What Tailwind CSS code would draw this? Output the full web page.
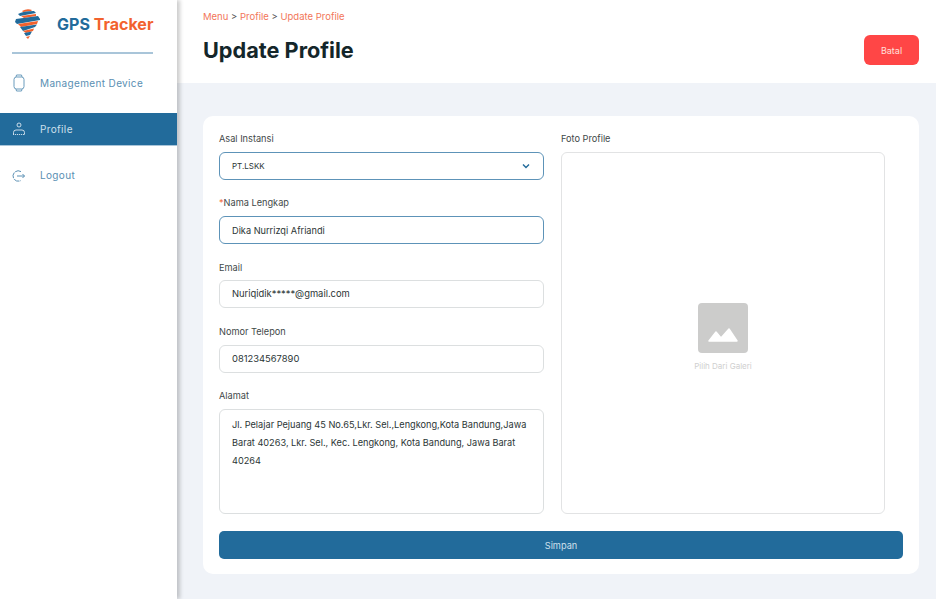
<!doctype html>
<html lang="en">
  <head>
    <meta charset="UTF-8" />
    <title>GPS Tracker - Update Profile</title>
    <script src="https://cdn.jsdelivr.net/npm/@tailwindcss/browser@4"></script>
  </head>
  <body class="w-[936px] h-[599px] overflow-hidden flex bg-[#f0f3f8] font-[Inter,sans-serif] text-[#2b3535]">
    <!-- sidebar -->
    <aside class="w-[177px] h-full shrink-0 bg-white shadow-[3px_0_4px_rgba(0,0,0,0.2)] z-10 flex flex-col">
      <div class="h-[54px] ml-[12px] mr-[24px] border-b-2 border-[#a9c5d9] flex items-start">
        <svg class="w-[25px] h-[30px] mt-[9px] ml-[3px] shrink-0" viewBox="0 0 25 30">
          <path d="M7 2 Q12 -1 17 1 L16 2 L8 3 Z" fill="#f2622e" />
          <path d="M3 5 Q8 2 19 2 L21 4 L5 7 Z" fill="#226b9b" />
          <path d="M6 7 L21 5 L21 7 L9 9 Z" fill="#f2622e" />
          <path d="M1 10 L23 7 L25 10 L25 11 L2 15 L0 13 Z" fill="#226b9b" />
          <path d="M3 15 L23 12 L22 15 L6 18 Z" fill="#f2622e" />
          <path d="M5 18 L22 15.5 L20 18 L8 22 Z" fill="#226b9b" />
          <path d="M8 22 L19 19.5 L18 22 L11 24 Z" fill="#f2622e" />
          <path d="M9 24 L17 22.5 L15 26 L11 27 Z" fill="#226b9b" />
          <path d="M11 28 L15 27 L13 30 Z" fill="#f2622e" />
        </svg>
        <div class="ml-[17px] mt-[14px] text-[16px] leading-[20px] font-bold whitespace-nowrap">
          <span class="text-[#226b9b]">GPS</span> <span class="text-[#f2622e]">Tracker</span>
        </div>
      </div>
      <nav class="mt-[13px] flex flex-col text-[10px] tracking-[0.35px]">
        <a class="h-[32px] flex items-center text-[#5a8fb3]">
          <svg class="w-[14px] h-[18px] ml-[12px] mr-[14px]" viewBox="0 0 14 18" fill="none" stroke="#6b9cbd" stroke-width="1">
            <rect x="2" y="3" width="10" height="12" rx="2.5" />
            <path d="M4 3 L4.5 1 H9.5 L10 3 M4 15 L4.5 17 H9.5 L10 15" />
          </svg>
          Management Device
        </a>
        <a class="mt-[14px] h-[33px] flex items-center bg-[#226b9b] border-b border-[#a9c5d9] text-[#cfe0ec]">
          <svg class="w-[14px] h-[14px] ml-[12px] mr-[14px]" viewBox="0 0 14 14" fill="none" stroke="#dbe7f0" stroke-width="0.9">
            <circle cx="7" cy="3" r="2" />
            <path d="M1.5 12.5 V10.5 Q1.5 8 4 8 H10 Q12.5 8 12.5 10.5 V12.5" />
            <path d="M1 12.5 H13" stroke-dasharray="1.2 0.8" />
          </svg>
          Profile
        </a>
        <a class="mt-[13px] h-[33px] flex items-center text-[#5a8fb3]">
          <svg class="w-[14px] h-[14px] ml-[12px] mr-[14px]" viewBox="0 0 14 14" fill="none" stroke="#5b90b4" stroke-width="1">
            <path d="M9 2.6 A5.2 5.2 0 1 0 9 11.4" stroke-dasharray="6 1" />
            <path d="M5 7 H12.5 M10.5 5 L12.5 7 L10.5 9" />
          </svg>
          Logout
        </a>
      </nav>
    </aside>

    <div class="flex-1 flex flex-col min-w-0">
      <!-- header -->
      <header class="h-[83px] shrink-0 bg-white pl-[26px] pr-[17px]">
        <p class="pt-[11px] text-[9.5px] leading-[12px] text-[#f2765a]">
          Menu <span class="text-[#555]">&gt;</span> Profile <span class="text-[#555]">&gt;</span> Update Profile
        </p>
        <div class="mt-[12px] flex items-center justify-between">
          <h1 class="text-[21.7px] leading-[30px] font-bold text-[#14262a]">Update Profile</h1>
          <button class="w-[55px] h-[30px] pt-[1px] rounded-[6px] bg-[#ff4646] text-[9px] text-[#ffe0dc]">Batal</button>
        </div>
      </header>

      <!-- form card -->
      <main class="mt-[33px] ml-[26px] mr-[17px] h-[458px] rounded-[10px] bg-white p-[16px] text-[9.2px]">
        <div class="flex gap-[17px]">
          <div class="w-[325px] shrink-0">
            <label class="block h-[12px] leading-[12px] mt-[1px] text-[#3f4949]">Asal Instansi</label>
            <div class="mt-[7px] h-[28px] rounded-[6px] border border-[#5d93b8] px-[12px] flex items-center justify-between text-[8px]">
              PT.LSKK
              <svg class="w-[8px] h-[6px] mr-[1px]" viewBox="0 0 8 6" fill="none" stroke="#226b9b" stroke-width="1.4"><path d="M1 1.5 L4 4.5 L7 1.5" /></svg>
            </div>
            <label class="block h-[12px] leading-[12px] mt-[17px] text-[#3f4949]"><span class="text-[#f2622e]">*</span>Nama Lengkap</label>
            <div class="mt-[7px] h-[28px] pt-[1px] rounded-[6px] border border-[#5d93b8] px-[12px] flex items-center">Dika Nurrizqi Afriandi</div>
            <label class="block h-[12px] leading-[12px] mt-[18px] text-[#3f4949]">Email</label>
            <div class="mt-[6px] h-[28px] pt-[1px] rounded-[6px] border border-[#dcdfe0] px-[12px] flex items-center text-[9.4px]">Nuriqidik*****@gmail.com</div>
            <label class="block h-[12px] leading-[12px] mt-[18px] text-[#3f4949]">Nomor Telepon</label>
            <div class="mt-[7px] h-[28px] pt-[1px] rounded-[6px] border border-[#dcdfe0] px-[12px] flex items-center text-[9.4px]">081234567890</div>
            <label class="block h-[12px] leading-[12px] mt-[17px] text-[#3f4949]">Alamat</label>
            <div class="mt-[7px] h-[105px] rounded-[6px] border border-[#dcdfe0] pl-[12px] pr-[8px] pt-[6px] leading-[18px]">
              Jl. Pelajar Pejuang 45 No.65,Lkr. Sel.,Lengkong,Kota Bandung,Jawa Barat 40263, Lkr. Sel., Kec. Lengkong, Kota Bandung, Jawa Barat 40264
            </div>
          </div>
          <div class="w-[325px] shrink-0 flex flex-col">
            <label class="block h-[12px] leading-[12px] mt-[1px] text-[#3f4949]">Foto Profile</label>
            <div class="mt-[7px] w-[324px] h-[362px] rounded-[6px] border-[1.5px] border-[#e2e3e4] flex flex-col items-center pt-[150px]">
              <svg class="w-[50px] h-[50px]" viewBox="0 0 50 50">
                <rect width="50" height="50" rx="4" fill="#cccccb" />
                <path d="M11 38 L18 29 L23 35 L31 26 L39 38 Z" fill="#fff" stroke="#fff" stroke-width="1.5" stroke-linejoin="round" />
              </svg>
              <p class="mt-[8px] text-[8px] leading-[11px] text-[#cfcfcf]">Pilih Dari Galeri</p>
            </div>
          </div>
        </div>
        <button class="mt-[17px] w-full h-[28px] pt-[1px] rounded-[5px] bg-[#226b9b] text-[#cfe0ec] text-[9.2px]">Simpan</button>
      </main>
    </div>
  </body>
</html>
